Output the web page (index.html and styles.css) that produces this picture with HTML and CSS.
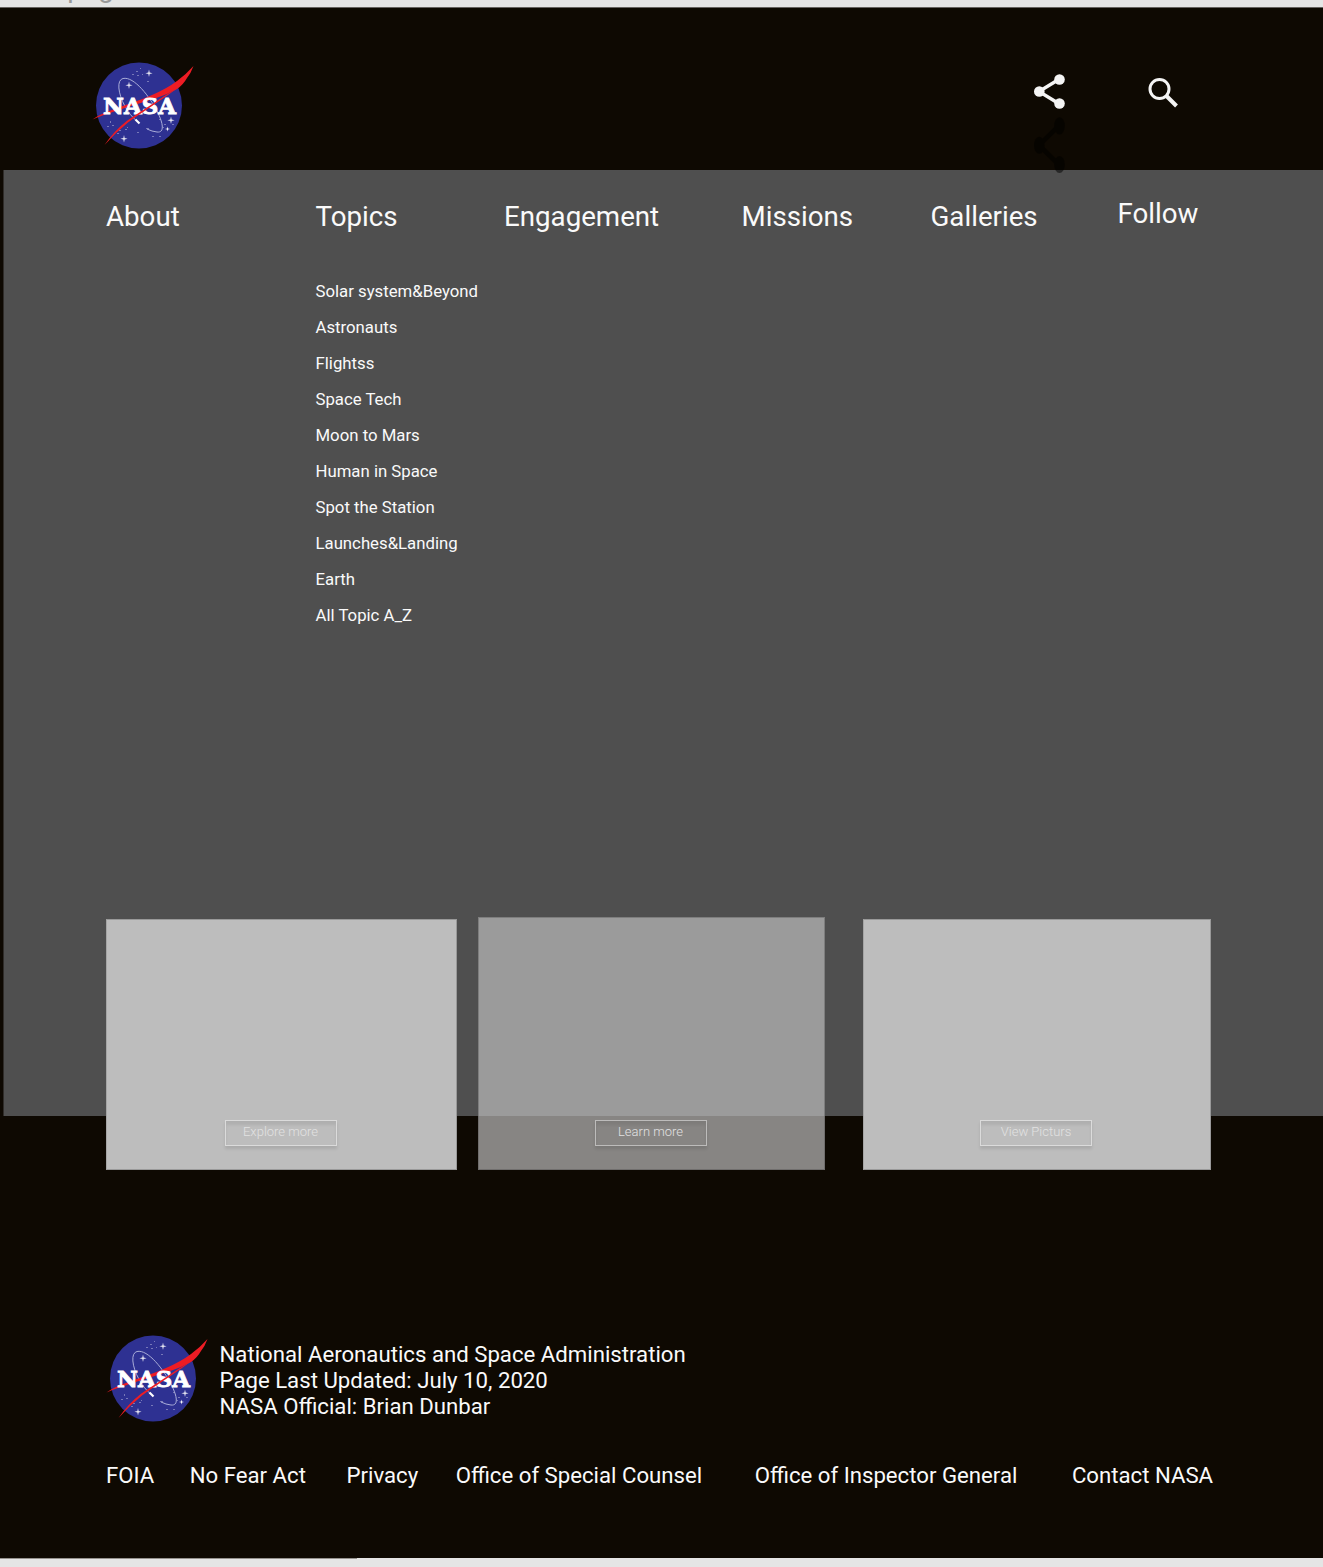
FILE: index.html
```html
<!DOCTYPE html>
<html lang="en">
<head>
<meta charset="utf-8">
<title>NASA</title>
<link rel="stylesheet" href="styles.css">
</head>
<body>
<svg class="sprite" aria-hidden="true">
  <symbol id="nasa-logo" viewBox="0 0 104 90">
    <circle cx="47" cy="43.500" r="43" fill="#2e3192"/>
    <g fill="#fff">
      <path id="spark" opacity=".85" d="M57 7.500l.7 2.900 2.900.8-2.900.8-.7 2.900-.7-2.900-2.900-.8 2.900-.8z"/>
      <use href="#spark" x="-20" y="12"/>
      <use href="#spark" x="-25" y="65.500"/>
      <use href="#spark" x="22" y="47"/>
      <path d="M75.500 64.500l.5 2 2 .5-2 .5-.5 2-.5-2-2-.5 2-.5z"/>
      <g opacity=".35"><path d="M44 9h2v1h-2zM48 6h1v1h-1zM40 12h2v1h-2zM45 13h2v1h-2zM50 12h1v1h-1zM55 19h2v1h-2zM20 63h2v1h-2zM18 59h1v2h-1zM27 68h2v1h-2zM33 67h2v1h-2zM25 71h2v1h-2zM35 65h1v1h-1zM45 70h2v1h-2zM54 66h3v1h-3zM60 74h2v1h-2zM67 74h2v1h-2zM72 62h2v1h-2zM80 62h2v1h-2zM67 57h2v1h-2zM15 64h2v1h-2zM71 65h1v1h-1z"/></g>
    </g>
    <path d="M46 60C30 48 21 19 31 16.500C42 14 58 35 65.500 50C71 61 73 71 65 70Q60 69.500 55 67" fill="none" stroke="#a9acd8" stroke-width="1"/>
    <path d="M.5 57.500Q6 53.500 12 51Q24 46 38 41.500Q50 37.500 60 33Q75 26.500 85 19Q94 12.500 101.500 4Q99 11 95 16Q91 23 85 27L75 32Q65 36 55 39Q32 46 12 53Q6 55 .5 57.500z" fill="#ed1c24"/>
    <text class="logo-word" x="11" y="52" textLength="73" lengthAdjust="spacingAndGlyphs">NASA</text>
    <path d="M87 25Q70 35 55 45.500Q43 53.200 35 58.800Q22 69 12.500 83Q23 71 36 60.500Q44 54.500 56 46.700Q66 40 76 33z" fill="#ed1c24"/>
    <path d="M43.500 57.500l4 4" stroke="#fff" stroke-width="2.200"/>
  </symbol>
  <symbol id="share" viewBox="0 0 32 36" preserveAspectRatio="none">
    <path d="M25.500 5L5 17.500L25.500 30" fill="none" stroke="currentColor" stroke-width="3.400"/>
    <g fill="currentColor"><circle cx="25.500" cy="5.500" r="5.300"/><circle cx="5.300" cy="17.500" r="5.300"/><circle cx="25.500" cy="29.500" r="5.300"/></g>
  </symbol>
</svg>

<div class="canvas-label"><span>Homepage</span></div>
<div class="page">
  <header class="header">
    <svg class="logo"><use href="#nasa-logo"/></svg>
    <div class="actions">
      <div class="share">
        <svg class="share-icon"><use href="#share"/></svg>
        <svg class="share-shadow"><use href="#share"/></svg>
      </div>
      <svg class="search-icon" viewBox="0 0 31 30"><circle cx="11.500" cy="11" r="9.500" fill="none" stroke="currentColor" stroke-width="3"/><path d="M18.500 18L28.500 28" stroke="currentColor" stroke-width="4"/></svg>
    </div>
  </header>

  <nav class="menu">
    <div class="menu-column"><a>About</a></div>
    <div class="menu-column"><a>Topics</a>
      <ul class="topics">
        <li>Solar system&amp;Beyond</li>
        <li>Astronauts</li>
        <li>Flightss</li>
        <li>Space Tech</li>
        <li>Moon to Mars</li>
        <li>Human in Space</li>
        <li>Spot the Station</li>
        <li>Launches&amp;Landing</li>
        <li>Earth</li>
        <li>All Topic A_Z</li>
      </ul>
    </div>
    <div class="menu-column"><a>Engagement</a></div>
    <div class="menu-column"><a>Missions</a></div>
    <div class="menu-column"><a>Galleries</a></div>
    <div class="menu-column menu-column-raised"><a>Follow</a></div>
  </nav>

  <main class="cards">
    <section class="card card-explore"><a class="button">Explore more</a></section>
    <section class="card card-learn"><a class="button">Learn more</a></section>
    <section class="card card-pictures"><a class="button">View Picturs</a></section>
  </main>

  <footer class="footer">
    <div class="about">
      <svg class="logo"><use href="#nasa-logo"/></svg>
      <p class="about-text">National Aeronautics and Space Administration<br>Page Last Updated: July 10, 2020<br>NASA Official: Brian Dunbar</p>
    </div>
    <div class="links">
      <a>FOIA</a><a>No Fear Act</a><a>Privacy</a><a>Office of Special Counsel</a><a>Office of Inspector General</a><a>Contact NASA</a>
    </div>
  </footer>
</div>
<div class="canvas-edge"></div>
</body>
</html>
```
FILE: styles.css
```css
* { box-sizing: border-box; }

body {
  margin: 0;
  height: 1567px;
  overflow: hidden;
  background: #e5e5e5;
  color: #fafafa;
  font-family: Roboto, "Liberation Sans", sans-serif;
}

.sprite { position: absolute; width: 0; height: 0; }

.canvas-label {
  display: flex;
  align-items: flex-start;
  height: 7px;
  color: #999;
  font-size: 28px;
  line-height: 28px;
}
.canvas-label span { margin: -26px 0 0 -8px; }

.page {
  height: 1551px;
  background: #0e0902;
  border-top: 1px solid #65625f;
}

.canvas-edge { width: 357px; height: 1px; background: #96938f; }

.header {
  display: flex;
  justify-content: space-between;
  height: 162px;
  padding: 54px 144px 0 92px;
}

.logo { flex: none; width: 104px; height: 90px; }

.logo-word {
  font: bold 22px "DejaVu Serif", serif;
  fill: #fff;
  stroke: #fff;
  stroke-width: 0.8px;
}

.actions { display: flex; gap: 82.5px; padding-top: 12px; color: #f4f4f4; }
.share { position: relative; width: 32px; height: 36px; }
.share-icon { display: block; width: 32px; height: 36px; }
.share-shadow {
  position: absolute;
  z-index: 1;
  left: 0;
  top: 43px;
  width: 32px;
  height: 58px;
  color: #000;
  opacity: 0.5;
}
.search-icon { width: 31px; height: 30px; margin-top: 4px; }

.menu {
  display: grid;
  grid-template-columns: 209.5px 188.5px 237.5px 189px 187px 1fr;
  height: 946px;
  margin-left: 3px;
  padding: 30px 0 0 102px;
  background: #4f4f4f;
  border-left: 1px solid #2f2c29;
  font-size: 27.7px;
  line-height: 33px;
}

.menu-column-raised { margin-top: -3px; }

.topics {
  margin: 40px 0 0;
  padding: 0;
  list-style: none;
  font-size: 16.75px;
  line-height: 36px;
}

.cards {
  display: flex;
  align-items: flex-end;
  height: 253px;
  margin-top: -199px;
  padding-left: 106px;
}

.card {
  display: flex;
  justify-content: center;
  align-items: flex-end;
  height: 251px;
  padding: 0 2px 23px 0;
  background: #bdbdbd;
  border: 1px solid #999;
  border-left-color: #a5a5a5;
}

.card-explore { width: 351px; }
.card-learn {
  width: 347px;
  height: 253px;
  margin: 0 38px 0 21px;
  background: rgba(190, 190, 190, 0.69);
  border-color: rgba(60, 60, 60, 0.3);
}
.card-pictures { width: 348px; }

.button {
  width: 112px;
  height: 26px;
  border: 1px solid rgba(255, 255, 255, 0.45);
  box-shadow: 0 3px 3px rgba(0, 0, 0, 0.1), inset 0 4px 3px rgba(0, 0, 0, 0.07);
  color: #e2e2e2;
  font-size: 13px;
  font-weight: 300;
  line-height: 22px;
  text-align: center;
}

.footer { padding-top: 165px; font-size: 22.2px; line-height: 26px; }
.about { display: flex; padding-left: 106px; }
.about-text { margin: 6px 0 0 9.5px; }
.links { display: flex; margin-top: 37px; padding-left: 106px; white-space: nowrap; }
.links a:nth-child(2) { margin-left: 35.5px; }
.links a:nth-child(3) { margin-left: 40.5px; }
.links a:nth-child(4) { margin-left: 37.5px; }
.links a:nth-child(5) { margin-left: 52.5px; }
.links a:nth-child(6) { margin-left: 54.5px; }
```
